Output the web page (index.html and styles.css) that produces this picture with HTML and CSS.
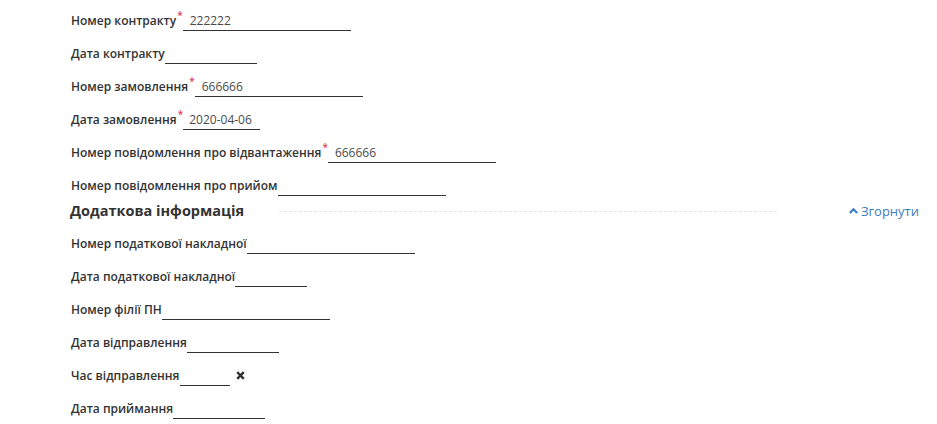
FILE: index.html
```html
<!DOCTYPE html>
<html lang="uk">
<head>
    <meta charset="UTF-8">
    <meta name="viewport" content="width=device-width, initial-scale=1.0">
    <title>Документ</title>
    <link rel="stylesheet" href="styles.css">
</head>
<body>
    <div class="form">
        <div class="field">
            <label class="field-label">Номер контракту<span class="req">*</span></label>
            <span class="field-input wide">222222</span>
        </div>
        <div class="field">
            <label class="field-label">Дата контракту</label>
            <span class="field-input date"></span>
        </div>
        <div class="field">
            <label class="field-label">Номер замовлення<span class="req">*</span></label>
            <span class="field-input wide">666666</span>
        </div>
        <div class="field">
            <label class="field-label">Дата замовлення<span class="req">*</span></label>
            <span class="field-input date-short">2020-04-06</span>
        </div>
        <div class="field">
            <label class="field-label">Номер повідомлення про відвантаження<span class="req">*</span></label>
            <span class="field-input wide">666666</span>
        </div>
        <div class="field">
            <label class="field-label">Номер повідомлення про прийом</label>
            <span class="field-input wide"></span>
        </div>

        <div class="section-header">
            <h3 class="section-title">Додаткова інформація</h3>
            <div class="section-rule"></div>
            <a class="section-toggle" href="#">
                <svg width="9" height="8" viewBox="0 0 9 8"><path d="M0.8 6 L4.5 2.3 L8.2 6" fill="none" stroke="currentColor" stroke-width="2.2"/></svg>
                Згорнути
            </a>
        </div>

        <div class="field">
            <label class="field-label">Номер податкової накладної</label>
            <span class="field-input wide"></span>
        </div>
        <div class="field">
            <label class="field-label">Дата податкової накладної</label>
            <span class="field-input date-tax"></span>
        </div>
        <div class="field">
            <label class="field-label">Номер філії ПН</label>
            <span class="field-input wide"></span>
        </div>
        <div class="field">
            <label class="field-label">Дата відправлення</label>
            <span class="field-input date"></span>
        </div>
        <div class="field">
            <label class="field-label">Час відправлення</label>
            <span class="field-input time"></span>
            <span class="clear-btn">
                <svg width="9" height="9" viewBox="0 0 9 9"><path d="M1.2 1.2 L7.8 7.8 M7.8 1.2 L1.2 7.8" stroke="currentColor" stroke-width="2.4"/></svg>
            </span>
        </div>
        <div class="field">
            <label class="field-label">Дата приймання</label>
            <span class="field-input date"></span>
        </div>
    </div>
</body>
</html>
```

FILE: styles.css
```css
* {
    margin: 0;
    padding: 0;
    box-sizing: border-box;
}

body {
    font-family: 'Open Sans', 'Noto Sans', sans-serif;
    font-size: 12px;
    color: #333;
    background: #fff;
}

.form {
    padding: 4px 18px 0 71px;
}

.field {
    display: flex;
    align-items: center;
    height: 33px;
}

.field-label {
    font-weight: 600;
    line-height: 20px;
    color: #333;
    display: flex;
    white-space: nowrap;
}

/* required marker */
.req {
    color: #e0405a;
    font-size: 10px;
    line-height: 9px;
    margin: 0 0 0 1px;
}

.field-input {
    display: block;
    height: 20px;
    line-height: 20px;
    padding: 0 7px;
    border-bottom: 1px solid #333;
    color: #4a4a4a;
    white-space: nowrap;
    overflow: hidden;
}

.field-input.wide {
    width: 168px;
}

.field-input.date {
    width: 92px;
}

.field-input.date-short {
    width: 77px;
    padding-left: 6px;
}

.field-input.date-tax {
    width: 72px;
}

.field-input.time {
    width: 50px;
}

.clear-btn {
    display: flex;
    margin-left: 6px;
    color: #333;
}

.section-header {
    display: flex;
    align-items: center;
    height: 16px;
    margin: 1px 0 8px -1px;
}

.section-title {
    font-size: 14.5px;
    font-weight: 700;
    color: #333;
    line-height: 16px;
}

.section-rule {
    flex: 1;
    border-top: 1px dashed #e2e2e2;
    margin: 1px 72px 0 35px;
}

.section-toggle {
    display: flex;
    align-items: center;
    gap: 3px;
    color: #3c7dc0;
    text-decoration: none;
    font-size: 13px;
}
```
